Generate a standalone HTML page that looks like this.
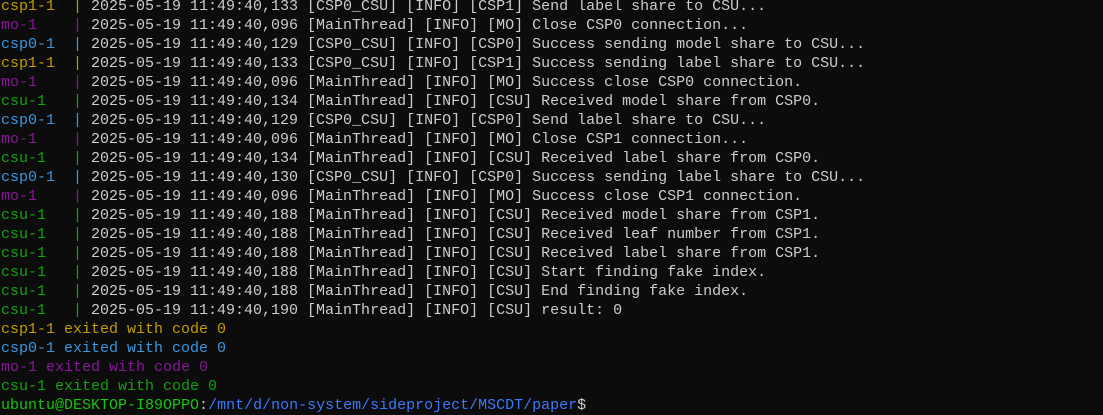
<!DOCTYPE html>
<html><head><style>
html,body{margin:0;padding:0;background:#0c0c0c;width:1103px;height:413px;overflow:hidden}
pre{margin:0;position:absolute;left:1px;top:-3px;font-family:"Liberation Mono",monospace;font-size:15px;line-height:19px;color:#cccccc;white-space:pre}
.y{color:#c19c00}.p{color:#881798}.b{color:#3a96dd}.g{color:#13a10e}.G{color:#16c60c}.B{color:#3b78ff}
</style></head><body><pre><span class="y">csp1-1  |</span> 2025-05-19 11:49:40,133 [CSP0_CSU] [INFO] [CSP1] Send label share to CSU...
<span class="p">mo-1    |</span> 2025-05-19 11:49:40,096 [MainThread] [INFO] [MO] Close CSP0 connection...
<span class="b">csp0-1  |</span> 2025-05-19 11:49:40,129 [CSP0_CSU] [INFO] [CSP0] Success sending model share to CSU...
<span class="y">csp1-1  |</span> 2025-05-19 11:49:40,133 [CSP0_CSU] [INFO] [CSP1] Success sending label share to CSU...
<span class="p">mo-1    |</span> 2025-05-19 11:49:40,096 [MainThread] [INFO] [MO] Success close CSP0 connection.
<span class="g">csu-1   |</span> 2025-05-19 11:49:40,134 [MainThread] [INFO] [CSU] Received model share from CSP0.
<span class="b">csp0-1  |</span> 2025-05-19 11:49:40,129 [CSP0_CSU] [INFO] [CSP0] Send label share to CSU...
<span class="p">mo-1    |</span> 2025-05-19 11:49:40,096 [MainThread] [INFO] [MO] Close CSP1 connection...
<span class="g">csu-1   |</span> 2025-05-19 11:49:40,134 [MainThread] [INFO] [CSU] Received label share from CSP0.
<span class="b">csp0-1  |</span> 2025-05-19 11:49:40,130 [CSP0_CSU] [INFO] [CSP0] Success sending label share to CSU...
<span class="p">mo-1    |</span> 2025-05-19 11:49:40,096 [MainThread] [INFO] [MO] Success close CSP1 connection.
<span class="g">csu-1   |</span> 2025-05-19 11:49:40,188 [MainThread] [INFO] [CSU] Received model share from CSP1.
<span class="g">csu-1   |</span> 2025-05-19 11:49:40,188 [MainThread] [INFO] [CSU] Received leaf number from CSP1.
<span class="g">csu-1   |</span> 2025-05-19 11:49:40,188 [MainThread] [INFO] [CSU] Received label share from CSP1.
<span class="g">csu-1   |</span> 2025-05-19 11:49:40,188 [MainThread] [INFO] [CSU] Start finding fake index.
<span class="g">csu-1   |</span> 2025-05-19 11:49:40,188 [MainThread] [INFO] [CSU] End finding fake index.
<span class="g">csu-1   |</span> 2025-05-19 11:49:40,190 [MainThread] [INFO] [CSU] result: 0
<span class="y">csp1-1 exited with code 0</span>
<span class="b">csp0-1 exited with code 0</span>
<span class="p">mo-1 exited with code 0</span>
<span class="g">csu-1 exited with code 0</span>
<span class="G">ubuntu@DESKTOP-I89OPPO</span>:<span class="B">/mnt/d/non-system/sideproject/MSCDT/paper</span>$</pre></body></html>
